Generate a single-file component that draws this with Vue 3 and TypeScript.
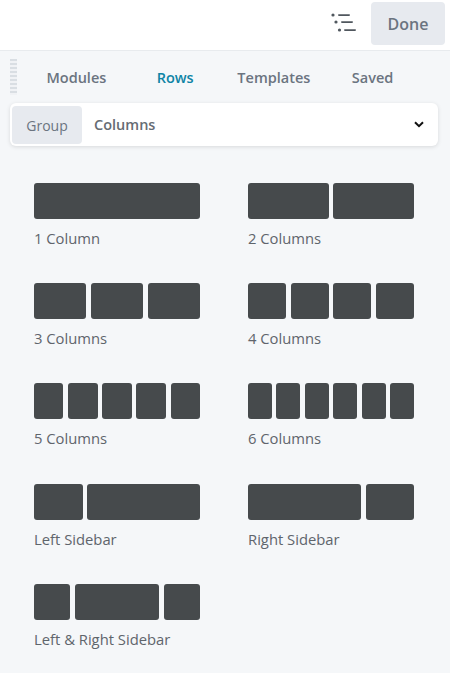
<script setup lang="ts">
interface RowItem {
  label: string;
  cols: number[];
}
const tabs = ["Modules", "Rows", "Templates", "Saved"];
const rows: RowItem[] = [
  { label: "1 Column", cols: [1] },
  { label: "2 Columns", cols: [1, 1] },
  { label: "3 Columns", cols: [1, 1, 1] },
  { label: "4 Columns", cols: [1, 1, 1, 1] },
  { label: "5 Columns", cols: [1, 1, 1, 1, 1] },
  { label: "6 Columns", cols: [1, 1, 1, 1, 1, 1] },
  { label: "Left Sidebar", cols: [48.8, 113] },
  { label: "Right Sidebar", cols: [113, 48] },
  { label: "Left & Right Sidebar", cols: [36, 84, 36] },
];
</script>

<template>
  <div class="panel">
    <header class="top">
      <svg class="list-icon" width="26" height="24" viewBox="0 0 26 24" fill="none">
        <g fill="#50575e">
          <circle cx="2" cy="3" r="1.6" />
          <circle cx="5" cy="10" r="1.6" />
          <circle cx="8.5" cy="18" r="1.6" />
          <rect x="7" y="2.2" width="12" height="1.7" rx="0.8" />
          <rect x="10" y="9.2" width="12" height="1.7" rx="0.8" />
          <rect x="13" y="17.2" width="12" height="1.7" rx="0.8" />
        </g>
      </svg>
      <button class="done">Done</button>
    </header>
    <div class="body">
      <div class="tabbar">
        <div class="grip"></div>
        <nav class="tabs">
          <span v-for="t in tabs" :key="t" class="tab" :class="{ active: t === 'Rows' }">{{ t }}</span>
        </nav>
      </div>
      <div class="select">
        <span class="group">Group</span>
        <span class="value">Columns</span>
        <svg class="chev" width="10" height="7" viewBox="0 0 10 7" fill="none">
          <path d="M1 1.2 5 5.2 9 1.2" stroke="#111" stroke-width="2" />
        </svg>
      </div>
      <div class="grid">
        <div v-for="r in rows" :key="r.label" class="item">
          <div class="bars">
            <div v-for="(c, i) in r.cols" :key="i" class="bar" :style="{ flexGrow: c }"></div>
          </div>
          <div class="label">{{ r.label }}</div>
        </div>
      </div>
    </div>
  </div>
</template>

<style>
html, body { margin: 0; background: #f5f7f9; }
</style>

<style scoped>
.panel {
  width: 450px;
  height: 673px;
  overflow: hidden;
  background: #f5f7f9;
  font-family: "Open Sans", "Noto Sans", sans-serif;
}
.top {
  height: 50px;
  background: #fff;
  border-bottom: 1px solid #e8ebee;
  display: flex;
  align-items: center;
  justify-content: flex-end;
  padding-right: 5px;
  gap: 14px;
}
.list-icon { margin-top: -2px; }
.done {
  width: 74px;
  height: 43px;
  margin-top: -3px;
  border: 0;
  border-radius: 4px;
  background: #e7eaef;
  color: #6b7480;
  font: 600 16px "Open Sans", sans-serif;
  padding: 0;
}
.tabbar {
  height: 52px;
  display: flex;
  align-items: center;
  position: relative;
}
.grip {
  position: absolute;
  left: 10px;
  top: 8px;
  width: 7px;
  height: 36px;
  background: repeating-linear-gradient(to bottom, #d9dee3 0 2px, #f0f2f5 2px 4px);
}
.tabs {
  display: flex;
  margin-left: 27px;
  width: 395px;
}
.tab {
  flex: 1;
  text-align: center;
  font-size: 14.5px;
  font-weight: 600;
  color: #6b7480;
}
.tab.active { color: #0e84a5; }
.select {
  margin-left: 10px;
  width: 428px;
  height: 43px;
  background: #fff;
  border-radius: 6px;
  box-shadow: 0 1px 4px rgba(0, 0, 0, 0.12);
  display: flex;
  align-items: center;
  padding: 2px;
  box-sizing: border-box;
}
.group {
  width: 70px;
  height: 38px;
  line-height: 39px;
  text-align: center;
  background: #e7eaef;
  border-radius: 4px;
  font-size: 14px;
  color: #6b7480;
}
.value {
  margin-left: 12px;
  font-size: 14.5px;
  font-weight: 600;
  color: #666c73;
  flex: 1;
}
.chev { margin-right: 12px; }
.grid {
  display: grid;
  grid-template-columns: 166px 166px;
  column-gap: 48px;
  padding: 37px 0 0 34px;
  grid-auto-rows: 100.2px;
}
.bars {
  display: flex;
  gap: 4.8px;
  height: 36px;
}
.bar {
  flex: 1 1 0;
  background: #464a4c;
  border-radius: 3px;
}
.label {
  margin-top: 9px;
  font-size: 14.8px;
  line-height: 20px;
  color: #5f656c;
}
</style>
